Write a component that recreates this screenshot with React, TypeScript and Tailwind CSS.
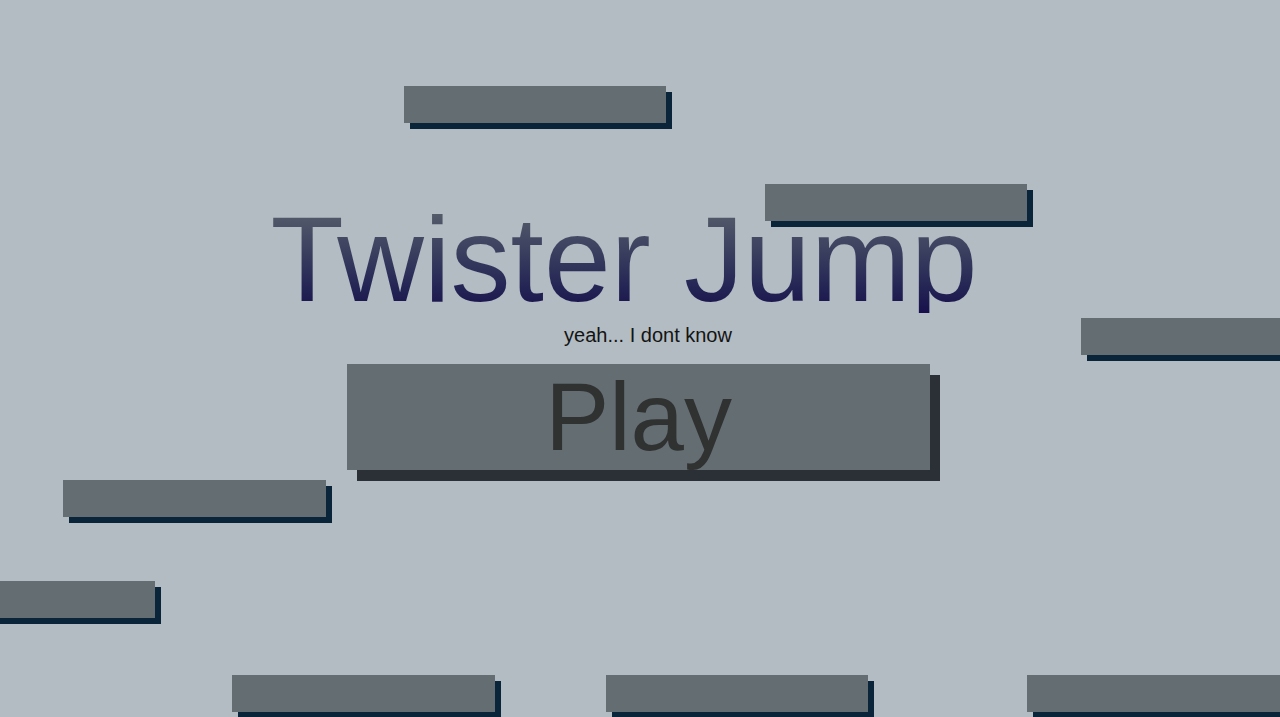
const PLATFORMS = [
  { x: 404, y: 86, w: 262 },
  { x: 765, y: 184, w: 262 },
  { x: 1081, y: 318, w: 262 },
  { x: 63, y: 480, w: 263 },
  { x: -107, y: 581, w: 262 },
  { x: 232, y: 675, w: 263 },
  { x: 606, y: 675, w: 262 },
  { x: 1027, y: 675, w: 262 },
];

function Platform({ x, y, w }: { x: number; y: number; w: number }) {
  return (
    <div
      className="absolute h-[37px] bg-[#636d72] shadow-[6px_6px_0_#0a2439]"
      style={{ left: x, top: y, width: w }}
    />
  );
}

export default function App() {
  return (
    <div
      className="relative h-[717px] w-full overflow-hidden bg-[#b2bcc2]"
      style={{ fontFamily: '"Liberation Sans", Arial, sans-serif' }}
    >
      {PLATFORMS.map((p, i) => (
        <Platform key={i} {...p} />
      ))}

      <div className="relative flex flex-col items-center pt-[205px]">
        <h1 className="mr-[32px] bg-gradient-to-b from-[#5a616b] to-[#180f4c] bg-clip-text text-[120px] leading-[108px] font-normal text-transparent">
          Twister Jump
        </h1>
        <p className="ml-[16px] mt-[8px] text-[20px] leading-[28px] text-[#141414]">
          yeah... I dont know
        </p>
        <button className="mt-[15px] mr-[3px] h-[106px] w-[583px] bg-[#636d72] text-[96px] leading-[106px] text-[#303131] shadow-[10px_11px_0_#2b3036]">
          Play
        </button>
      </div>
    </div>
  );
}
